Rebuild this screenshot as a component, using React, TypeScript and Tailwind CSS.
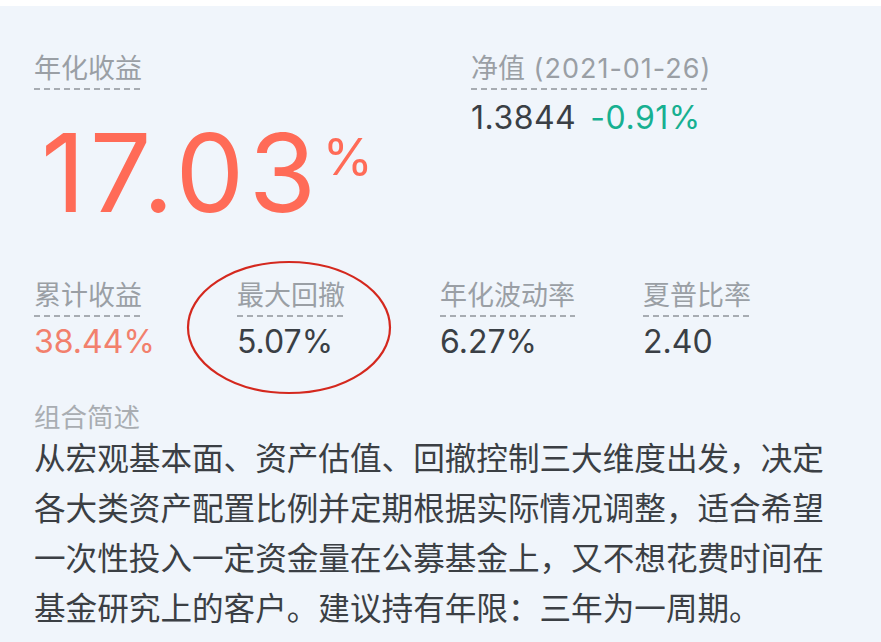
const FONT = "font-['Inter','Noto_Sans_CJK_SC',sans-serif]"

function DashLabel({ children }: { children: React.ReactNode }) {
  return (
    <span className="inline-block whitespace-nowrap pb-[6px] text-[27px] leading-[30px] text-[#9a9fa5] bg-[repeating-linear-gradient(to_right,#a7acb2_0_6px,transparent_6px_10px)] bg-bottom bg-no-repeat bg-[length:100%_2px]">
      {children}
    </span>
  )
}

const stats = [
  { label: "累计收益", value: "38.44%", tone: "text-[#f2806d]" },
  { label: "最大回撤", value: "5.07%", tone: "text-[#3a3f45]" },
  { label: "年化波动率", value: "6.27%", tone: "text-[#3a3f45]" },
  { label: "夏普比率", value: "2.40", tone: "text-[#3a3f45]" },
]

export default function App() {
  return (
    <div className={`${FONT} w-[881px] h-[642px] overflow-hidden bg-[#f0f5fb]`}>
      <div className="h-[6px] bg-white" />
      <div className="relative pl-[34px]">
        <div className="flex pt-[48px]">
          <div className="w-[437px]">
            <DashLabel>年化收益</DashLabel>
            <div className="mt-[28px] flex items-start text-[#ff6b57]">
              <span className="ml-[7px] text-[109px] leading-[109px] tracking-[4.5px]">17.03</span>
              <span className="ml-[2px] mt-[13px] text-[51px] leading-[51px]">%</span>
            </div>
          </div>
          <div>
            <DashLabel>
              净值<span className="tracking-[1px]"> (2021-01-26)</span>
            </DashLabel>
            <div className="mt-[8px] flex gap-[14px] text-[32px] leading-[40px] tracking-[0.5px]">
              <span className="text-[#3a3f45]">1.3844</span>
              <span className="text-[#17b091]">-0.91%</span>
            </div>
          </div>
        </div>

        <div className="mt-[54px] flex">
          {stats.map((s) => (
            <div key={s.label} className="w-[203px]">
              <DashLabel>{s.label}</DashLabel>
              <div className={`mt-[5px] text-[32px] leading-[40px] ${s.tone}`}>{s.value}</div>
            </div>
          ))}
        </div>

        <div className="mt-[40px] text-[26.5px] leading-[30px] text-[#a9adb2]">组合简述</div>
        <p className="mt-[2px] w-[800px] text-[31.6px] leading-[50px] text-[#3b3f44]">
          从宏观基本面、资产估值、回撤控制三大维度出发，决定各大类资产配置比例并定期根据实际情况调整，适合希望一次性投入一定资金量在公募基金上，又不想花费时间在基金研究上的客户。建议持有年限：三年为一周期。
        </p>

        <svg
          className="pointer-events-none absolute left-[186px] top-[254px]"
          width="206"
          height="135"
          viewBox="0 0 206 135"
        >
          <ellipse cx="103" cy="67.5" rx="101" ry="65.5" fill="none" stroke="#d4281e" strokeWidth="2.2" />
        </svg>
      </div>
    </div>
  )
}
